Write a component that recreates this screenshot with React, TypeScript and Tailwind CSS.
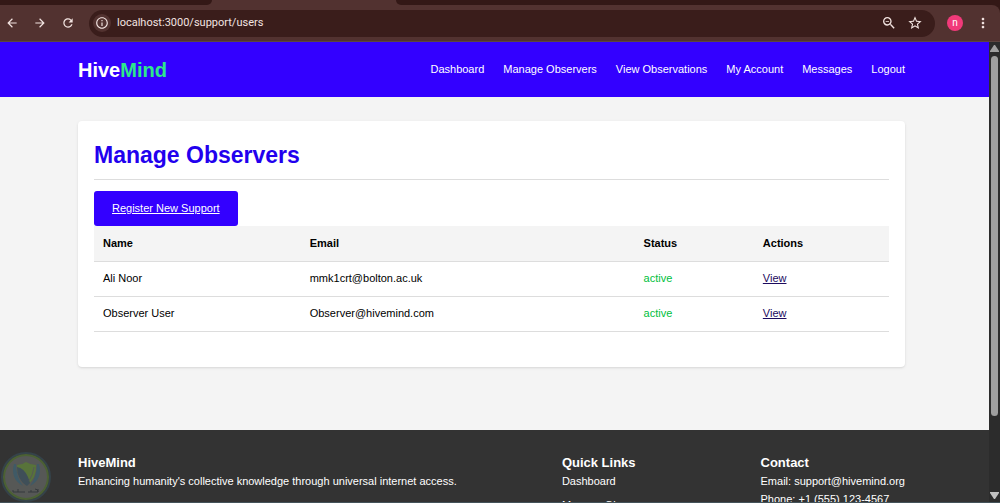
import { MdArrowBack, MdArrowForward, MdInfoOutline, MdMoreVert, MdRefresh, MdStarBorder, MdZoomOut } from "react-icons/md"

const navLinks = [
    { label: "Dashboard", href: "/support/dashboard" },
    { label: "Manage Observers", href: "/support/users" },
    { label: "View Observations", href: "/support/observations" },
    { label: "My Account", href: "/account" },
    { label: "Messages", href: "/messages" },
    { label: "Logout", href: "/logout" },
]

const observers = [
    { name: "Ali Noor", email: "mmk1crt@bolton.ac.uk", status: "active" },
    { name: "Observer User", email: "Observer@hivemind.com", status: "active" },
]

const BrowserBar = () => {
    return (
        <div className="shrink-0 bg-[#331816]">
            <div className="flex h-[5px] bg-[#523230]">
                <div className="w-[212px] rounded-br-md bg-[#331816]" />
                <div className="w-[184px]" />
                <div className="flex-1 rounded-bl-md bg-[#331816]" />
            </div>
            <div className="flex h-[37px] items-center rounded-tr-lg border-b border-[#5d4540] bg-[#523230] pl-1 pr-[9px] text-[#f3e4e1]">
                <button aria-label="Back" className="flex w-4 justify-center">
                    <MdArrowBack className="size-3.5" />
                </button>
                <button aria-label="Forward" className="ml-3 flex w-4 justify-center">
                    <MdArrowForward className="size-3.5" />
                </button>
                <button aria-label="Reload" className="ml-3 flex w-4 justify-center">
                    <MdRefresh className="size-3.5" />
                </button>
                <div className="ml-[13px] flex h-[27px] flex-1 items-center rounded-full bg-[#3a1d1b] pl-1 pr-3">
                    <button aria-label="Site information" className="flex size-[18px] items-center justify-center rounded-full bg-[#523230]">
                        <MdInfoOutline className="size-3.5" />
                    </button>
                    <input
                        aria-label="Address"
                        defaultValue="localhost:3000/support/users"
                        className="ml-1.5 min-w-0 flex-1 bg-transparent font-[Roboto,sans-serif] text-[11px] outline-none"
                    />
                    <button aria-label="Zoom"><MdZoomOut className="size-4" /></button>
                    <button aria-label="Bookmark" className="ml-2.5"><MdStarBorder className="size-4" /></button>
                </div>
                <button aria-label="Profile" className="ml-3 size-4 rounded-full bg-[#f13a7a] font-[Roboto,sans-serif] text-[10px] leading-4 text-white">
                    n
                </button>
                <button aria-label="Menu" className="ml-3"><MdMoreVert className="size-4" /></button>
            </div>
        </div>
    )
}

const Header = () => {
    return (
        <header className="flex h-[55px] items-center justify-between bg-[#3300ff] pl-[78px] pr-[84px] text-white">
            <a href="/" className="text-xl font-bold">
                Hive<span className="text-[#2de88a]">Mind</span>
            </a>
            <nav className="flex gap-[19px]">
                {navLinks.map((link) => (
                    <a key={link.label} href={link.href}>{link.label}</a>
                ))}
            </nav>
        </header>
    )
}

const ObserversTable = () => {
    return (
        <table className="w-full table-fixed border-collapse text-left">
            <thead className="bg-[#f4f4f4]">
                <tr className="h-[35px] border-b border-[#dddddd]">
                    <th className="w-[26%] px-[9px]">Name</th>
                    <th className="w-[42%] px-[9px]">Email</th>
                    <th className="w-[15%] px-[9px]">Status</th>
                    <th className="w-[17%] px-[9px]">Actions</th>
                </tr>
            </thead>
            <tbody>
                {observers.map((o) => (
                    <tr key={o.email} className="h-[35px] border-b border-[#dddddd]">
                        <td className="px-[9px]">{o.name}</td>
                        <td className="px-[9px]">{o.email}</td>
                        <td className="px-[9px] text-[#00c040]">{o.status}</td>
                        <td className="px-[9px]">
                            <a href="/support/users/view" className="text-[#1c0a5e] underline">View</a>
                        </td>
                    </tr>
                ))}
            </tbody>
        </table>
    )
}

const Footer = () => {
    return (
        <footer className="flex items-start justify-between bg-[#333333] pl-[78px] pr-[84px] pt-6 leading-[18px] text-white">
            <section>
                <h2 className="text-[13px] font-bold">HiveMind</h2>
                <p>Enhancing humanity's collective knowledge through universal internet access.</p>
            </section>
            <section>
                <h2 className="text-[13px] font-bold">Quick Links</h2>
                <ul className="flex flex-col gap-1.5">
                    <li><a href="/support/dashboard">Dashboard</a></li>
                    <li><a href="/support/users">Manage Observers</a></li>
                </ul>
            </section>
            <section>
                <h2 className="text-[13px] font-bold">Contact</h2>
                <p>Email: support@hivemind.org</p>
                <p>Phone: +1 (555) 123-4567</p>
            </section>
        </footer>
    )
}

const Watermark = () => (
    <svg viewBox="0 0 52 52" className="absolute bottom-0 left-0 size-[52px]" aria-hidden="true">
        <circle cx="26" cy="26" r="24" fill="none" stroke="#35434a" strokeWidth="2" />
        <circle cx="26" cy="26" r="22" fill="#565856" stroke="#4b6134" strokeWidth="2" />
        {/* shield */}
        <path d="M17 14q5 0 9-3 5 3 10 3 1 13-9 20-10-7-10-20z" fill="#58733a" />
        <path d="M17 16q7 1 11 10l2 6-3 3q-10-6-10-19z" fill="#3f4f58" />
        <path d="M29 30q4-6 5-14" fill="none" stroke="#565856" />
        {/* wings */}
        <path d="M14 13q-4 15 9 22-7-9-7-22zM39 13q4 15-9 22 7-9 7-22z" fill="#3f5a66" />
        <path d="M13 41h12M13 41v-2M18 41v-3M28 41h10q0-3-3-3M31 41v-2M38 41v-3" fill="none" stroke="#35393c" />
    </svg>
)

const Scrollbar = () => (
    <div className="flex w-[11px] shrink-0 flex-col items-center bg-[#2c2c2c]" aria-hidden="true">
        <svg viewBox="0 0 11 14" className="h-3.5 w-[11px]"><path d="M5 3h1l4 6v1H1V9z" fill="#a0a0a0" /></svg>
        <div className="h-[360px] w-[7px] rounded-full bg-[#9f9f9f]" />
        <svg viewBox="0 0 11 14" className="mt-auto h-3.5 w-[11px]"><path d="M5 11h1l4-6V4H1v1z" fill="#c0c0c0" /></svg>
    </div>
)

const App = () => {
    return (
        <div className="relative flex h-screen flex-col overflow-hidden font-['Liberation_Sans',Arial,sans-serif] text-[11px]">
            <BrowserBar />
            <div className="flex min-h-0 flex-1 border-b border-[#44535a]">
                <div className="min-w-0 flex-1 overflow-hidden bg-[#f4f4f4] text-black">
                    <Header />
                    <main className="pb-[63px] pl-[78px] pr-[84px] pt-6">
                        <div className="rounded bg-white px-4 pb-[35px] pt-[18px] shadow">
                            <h1 className="border-b border-[#dddddd] pb-2 text-[23px] font-bold leading-8 text-[#2200ee]">Manage Observers</h1>
                            <a href="/support/register" className="mt-[11px] flex h-[35px] w-fit items-center rounded-[3px] bg-[#3300ff] px-[18px] text-white underline">
                                Register New Support
                            </a>
                            <ObserversTable />
                        </div>
                    </main>
                    <Footer />
                </div>
                <Scrollbar />
            </div>
            <Watermark />
        </div>
    )
}

export default App
